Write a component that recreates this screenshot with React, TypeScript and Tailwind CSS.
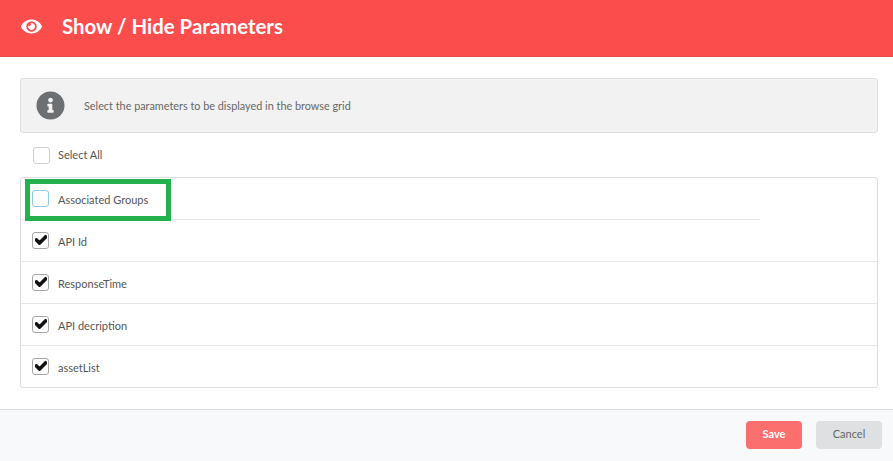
import { FaEye, FaInfoCircle, FaCheck } from "react-icons/fa";

function Box({ checked, focus }: { checked?: boolean; focus?: boolean }) {
  return (
    <span
      className={`flex items-center justify-center w-[17px] h-[17px] shrink-0 rounded-[3px] border bg-white ${
        focus ? "border-[#8fc9e3]" : checked ? "border-[#a8a8a8]" : "border-[#cfcfcf]"
      }`}
    >
      {checked && <FaCheck className="w-[12px] h-[12px] text-[#111] -mt-[2px] stroke-[50px]" />}
    </span>
  );
}

function Row({ label, checked, focus, last, short }: { label: string; checked?: boolean; focus?: boolean; last?: boolean; short?: boolean }) {
  return (
    <div
      className={`flex items-center gap-[9px] pl-[11px] ${last ? "h-[41px]" : "h-[42px] border-b border-[#e6e6e6]"} ${short ? "w-[739px]" : ""}`}
    >
      <Box checked={checked} focus={focus} />
      <span className="text-[11px] text-[#555] mt-[3px]">{label}</span>
    </div>
  );
}

export default function App() {
  return (
    <div className="w-[893px] h-[461px] flex flex-col bg-white font-['Lato',sans-serif] overflow-hidden">
      <header className="flex items-center h-[57px] shrink-0 bg-[#fc4d4d] border-b border-[#e84848] pl-[21px] pb-[3px] gap-[20px] text-white">
        <FaEye className="w-[21px] h-[21px]" />
        <h1 className="text-[20.4px] font-bold">Show / Hide Parameters</h1>
      </header>
      <main className="flex-1 flex flex-col pl-[20px] pr-[15px] pt-[21px]">
        <div className="flex items-center h-[55px] rounded-[3px] border border-[#dedede] bg-[#f2f2f2] pl-[15px] gap-[19px]">
          <FaInfoCircle className="w-[29px] h-[29px] text-[#6d7072]" />
          <span className="text-[10.85px] text-[#666] mt-[1px]">Select the parameters to be displayed in the browse grid</span>
        </div>
        <div className="flex items-center gap-[8px] h-[44px] pl-[13px]">
          <Box />
          <span className="text-[11px] text-[#555]">Select All</span>
        </div>
        <div className="relative rounded-[3px] border border-[#dedede]">
          <Row label="Associated Groups" focus short />
          <Row label="API Id" checked />
          <Row label="ResponseTime" checked />
          <Row label="API decription" checked />
          <Row label="assetList" checked last />
          <div className="absolute left-[4px] top-[1px] w-[146px] h-[42px] border-[5px] border-[#22b14c]" />
        </div>
      </main>
      <footer className="flex items-center justify-end h-[52px] shrink-0 gap-[14px] pr-[11px] pb-[2px] bg-[#f8f9fb] border-t border-[#dcdcdc]">
        <button className="w-[56px] h-[28px] rounded-[4px] bg-[#fb6f6f] text-white text-[11px] font-bold">Save</button>
        <button className="w-[66px] h-[28px] rounded-[4px] bg-[#dfe0e2] text-[#666] text-[11px]">Cancel</button>
      </footer>
    </div>
  );
}
